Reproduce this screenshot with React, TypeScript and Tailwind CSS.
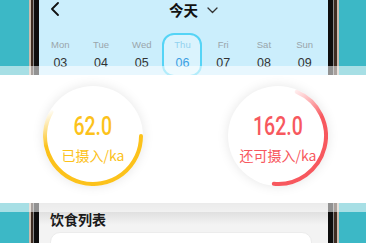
import React from "react";

const days = [
  ["Mon", "03"],
  ["Tue", "04"],
  ["Wed", "05"],
  ["Thu", "06"],
  ["Fri", "07"],
  ["Sat", "08"],
  ["Sun", "09"],
];

function LeftFrame() {
  return (
    <div className="flex h-full shrink-0">
      <div className="w-[2px] bg-[#cbbcae]" />
      <div className="w-[2px] bg-[#3d2c22]" />
      <div className="w-[1px] bg-[#8a8a8a]" />
      <div className="w-[5px] bg-[#0d0d0d]" />
    </div>
  );
}

function RightFrame() {
  return (
    <div className="flex h-full shrink-0">
      <div className="w-[5px] bg-[#0d0d0d]" />
      <div className="w-[1px] bg-[#8a8a8a]" />
      <div className="w-[3px] bg-[#3d2c22]" />
      <div className="w-[2px] bg-[#cbbcae]" />
    </div>
  );
}

function Ring({
  kind,
  value,
  label,
}: {
  kind: "yellow" | "red";
  value: string;
  label: string;
}) {
  const yellow = kind === "yellow";
  const color = yellow ? "#fcc21b" : "#f7585e";
  return (
    <div className="relative w-[100px] h-[100px] shrink-0 rounded-full bg-white shadow-[0_0_12px_rgba(0,0,0,0.1)]">
      <svg className="absolute inset-0" width="100" height="100" viewBox="0 0 100 100">
        <defs>
          {yellow ? (
            <linearGradient id="gy" gradientUnits="userSpaceOnUse" x1="5" y1="15" x2="25" y2="55">
              <stop offset="0.2" stopColor="#fcc21b" stopOpacity="0" />
              <stop offset="0.9" stopColor="#fcc21b" stopOpacity="1" />
            </linearGradient>
          ) : (
            <linearGradient id="gr" gradientUnits="userSpaceOnUse" x1="60" y1="0" x2="95" y2="40">
              <stop offset="0.12" stopColor="#ff8a8e" stopOpacity="0.1" />
              <stop offset="0.85" stopColor="#f7585e" stopOpacity="1" />
            </linearGradient>
          )}
        </defs>
        {yellow ? (
          <path d="M 98 50 A 48 48 0 1 1 8.43 26" fill="none" stroke="url(#gy)" strokeWidth="4" strokeLinecap="round" />
        ) : (
          <path d="M 68.75 5.8 A 48 48 0 0 1 45.8 97.8" fill="none" stroke="url(#gr)" strokeWidth="4" strokeLinecap="round" />
        )}
      </svg>
      <div className="relative flex flex-col items-center pt-[29px]" style={{ color }}>
        <div className="h-[24px] leading-[24px] text-[25px] font-medium font-['Roboto',sans-serif] scale-x-[0.78]">
          {value}
        </div>
        <div className="mt-[8px] h-[16px] leading-[16px] text-[14px] font-['Noto_Sans_CJK_SC',sans-serif]">
          {label}
        </div>
      </div>
    </div>
  );
}

export default function App() {
  return (
    <div className="relative w-[366px] h-[243px] overflow-hidden bg-[#3cb8c6] flex font-['Noto_Sans_CJK_SC',sans-serif]">
      <div className="w-[29px] shrink-0" />
      <LeftFrame />
      <div className="w-[289px] shrink-0 flex flex-col h-full overflow-hidden">
        <div className="h-[203px] shrink-0 bg-[#cbeefc] flex flex-col">
          <div className="h-[18px] pt-[1px] relative flex items-center justify-center">
            <svg className="absolute left-[11px] top-[2px]" width="10" height="14" viewBox="0 0 10 14">
              <path d="M8 1 L2 7 L8 13" fill="none" stroke="#111" strokeWidth="1.8" strokeLinecap="round" strokeLinejoin="round" />
            </svg>
            <div className="relative text-[14.5px] leading-[17px] font-bold text-[#111]">
              今天
              <svg className="absolute left-full top-[6px] ml-[9px]" width="11" height="7" viewBox="0 0 11 7">
                <path d="M1 1 L5.5 5.5 L10 1" fill="none" stroke="#333" strokeWidth="1.3" strokeLinecap="round" strokeLinejoin="round" />
              </svg>
            </div>
          </div>
          <div className="mt-[15px] grid grid-cols-7 pl-[1px] pr-[3px] font-['Liberation_Sans',sans-serif]">
            {days.map(([d, n]) => {
              const active = d === "Thu";
              return (
                <div key={d} className="flex justify-center">
                  {active ? (
                    <div className="w-[40px] h-[44px] rounded-[12px] border-2 border-[#55d4f6] bg-white/30 flex flex-col items-center pt-[4px]">
                      <div className="leading-[12px] text-[9.5px] text-[#92d2ef]">{d}</div>
                      <div className="mt-[6px] leading-[12px] text-[12.5px] text-[#3c9fe3]">{n}</div>
                    </div>
                  ) : (
                    <div className="h-[44px] flex flex-col items-center pt-[6px]">
                      <div className="leading-[12px] text-[9.5px] text-[#9aa5ab]">{d}</div>
                      <div className="mt-[6px] leading-[12px] text-[12.5px] text-[#333]">{n}</div>
                    </div>
                  )}
                </div>
              );
            })}
          </div>
        </div>
        <div className="flex-1 min-h-0 bg-[linear-gradient(to_bottom,#d2d2d2,#f3f3f3_22px)] flex flex-col">
          <div className="shrink-0 pl-[11px] pt-[9px] h-[23px] leading-[14px] text-[14px] font-bold text-[#1a1a1a]">
            饮食列表
          </div>
          <div className="shrink-0 mt-[6px] ml-[11px] mr-[16px] h-[40px] bg-white rounded-[10px] border border-[#ececec]" />
        </div>
      </div>
      <RightFrame />
      <div className="flex-1" />

      <div className="absolute left-0 right-0 top-[66px] h-[146px] border-y-[9px] border-white/55 bg-white bg-clip-padding">
        <div className="flex pt-[11px] pl-[43px] gap-[85px]">
          <Ring kind="yellow" value="62.0" label="已摄入/ka" />
          <Ring kind="red" value="162.0" label="还可摄入/ka" />
        </div>
      </div>
    </div>
  );
}
